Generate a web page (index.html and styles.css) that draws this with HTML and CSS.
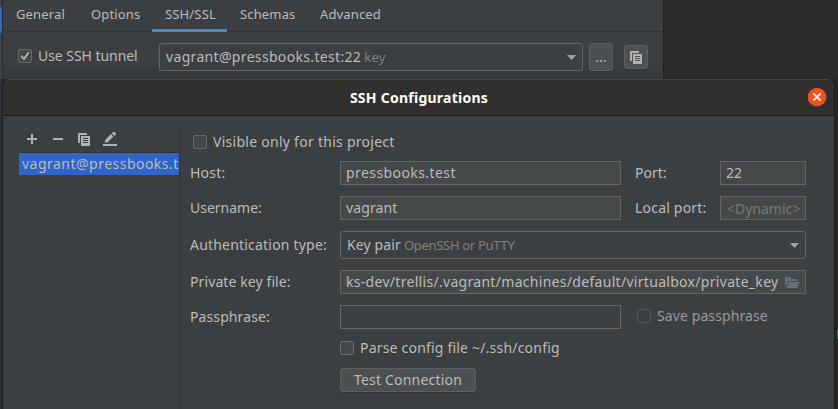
FILE: index.html
```
<!DOCTYPE html>
<html lang="en">
<head>
<meta charset="utf-8">
<title>SSH Configurations</title>
<link rel="stylesheet" href="styles.css">
</head>
<body>
<svg class="sprite" aria-hidden="true">
  <symbol id="copy" viewBox="0 0 12 13"><path fill="#afb1b3" d="M0 0h9v2H2v8H0z"/><path fill="#afb1b3" fill-rule="evenodd" d="M3 3h9v10H3zM5 5v1h5V5zM5 7v1h5V7zM5 9v1h5V9z"/></symbol>
  <symbol id="arrow" viewBox="0 0 9 5"><path fill="#a2a5a7" d="M0 0h9L4.5 5z"/></symbol>
</svg>
<div class="desktop">
  <div class="backdrop">
    <div class="edge"><i></i></div>
    <section class="settings">
      <nav class="tabs">
        <span class="tab t1">General</span><span class="tab t2">Options</span><span class="tab t3 active">SSH/SSL</span><span class="tab t4">Schemas</span><span class="tab t5">Advanced</span>
      </nav>
      <div class="tunnel">
        <span class="check"><svg width="14" height="14" viewBox="0 0 14 14"><path d="M3.3 6.8 6 10 10.8 3.3" fill="none" stroke="#b4b6b7" stroke-width="1.9"/></svg></span>
        <span class="tunnel-label">Use SSH tunnel</span>
        <div class="combo tunnel-combo"><span class="combo-text">vagrant@pressbooks.test:22</span><small class="key">key</small><svg class="arrow" width="9" height="5"><use href="#arrow"/></svg></div>
        <button class="btn more">...</button>
        <button class="btn copy-btn"><svg width="12" height="13"><use href="#copy"/></svg></button>
      </div>
    </section>
  </div>
  <section class="dialog">
    <header class="titlebar"><h1>SSH Configurations</h1>
      <svg class="close" width="20" height="20" viewBox="0 0 20 20"><circle cx="10" cy="10" r="9.3" fill="#e95420"/><path d="m6.5 6.5 7 7m0-7-7 7" stroke="#fff" stroke-width="1.7"/></svg>
    </header>
    <div class="content">
      <aside class="side">
        <div class="toolbar">
          <svg width="10" height="10" viewBox="0 0 10 10"><path fill="#afb1b3" d="M4 0h2v4h4v2H6v4H4V6H0V4h4z"/></svg>
          <svg width="10" height="10" viewBox="0 0 10 10"><path fill="#afb1b3" d="M0 4h10v2H0z"/></svg>
          <svg width="12" height="13"><use href="#copy"/></svg>
          <svg class="pencil" width="14" height="14" viewBox="0 0 14 14"><path fill="#afb1b3" d="M0 12h14v2H0zM2 10.5V8l6-6 2.5 2.5-6 6zM8.8 1.3 10 0h1.5L13 1.5V2.500L11.500 4z"/></svg>
        </div>
        <div class="item"><span>vagrant@pressbooks.t</span></div>
      </aside>
      <main class="form">
        <label class="check-row visible"><span class="check"></span><span class="w-visible">Visible only for this project</span></label>
        <div class="grid">
          <span class="label w-host">Host:</span><span class="field"><span class="w-pb">pressbooks.test</span></span><span class="label w-port">Port:</span><span class="field"><span class="w-22">22</span></span>
          <span class="label w-user">Username:</span><span class="field"><span class="w-vagrant">vagrant</span></span><span class="label w-local">Local port:</span><span class="field hint"><span class="w-dyn">&lt;Dynamic&gt;</span></span>
          <span class="label w-auth">Authentication type:</span><div class="combo wide"><span class="w-pair">Key pair</span><small class="w-open">OpenSSH or PuTTY</small><svg class="arrow" width="9" height="5"><use href="#arrow"/></svg></div>
          <span class="label w-file">Private key file:</span><div class="field wide path"><span class="w-path">ks-dev/trellis/.vagrant/machines/default/virtualbox/private_key</span><svg class="folder" width="15" height="11" viewBox="0 0 15 11"><path fill="#647077" d="M0 10V0h5l1.500 2H12v2H3.500zM4 5h11l-3 6H1z"/></svg></div>
          <span class="label w-pass">Passphrase:</span><span class="field dim"></span><label class="check-row save"><span class="check"></span><span class="w-save">Save passphrase</span></label>
          <label class="check-row parse"><span class="check"></span><span class="w-parse">Parse config file ~/.ssh/config</span></label>
          <button class="btn test"><span class="w-test">Test Connection</span></button>
        </div>
      </main>
    </div>
  </section>
</div>
</body>
</html>
```
FILE: styles.css
```
* { box-sizing: border-box; }
body { margin: 0; width: 838px; height: 409px; overflow: hidden; background: #242424; color: #bbbbbb; font: 14px/20px "Noto Sans", sans-serif; }
.sprite { position: absolute; width: 0; height: 0; }
svg { display: block; flex: none; }
span, small { white-space: nowrap; }
.desktop { height: 409px; background: linear-gradient(#3f6b4a, #3f6b4a) 837px 330px / 1px 9px no-repeat, linear-gradient(90deg, #2b3038 0 2px, #242424 2px); }
.backdrop { display: flex; height: 79px; background: #2b2b2b; }
.edge { width: 3px; padding-top: 7px; background: linear-gradient(90deg, #3c414a 0 2px, #292b2c 2px); }
.edge i { display: block; width: 2px; height: 26px; background: #2f65ca; }
.settings { width: 661px; background: linear-gradient(#3c3f41 64px, #343739); border-right: 1px solid #222; }
.tabs { display: flex; height: 32px; border-bottom: 1px solid #323232; padding-left: 13px; gap: 26px; font-size: 13px; line-height: 29px; letter-spacing: 0.15px; }
.tab { height: 32px; width: 49px; }
.t2 { width: 48px; } .t4 { width: 54px; } .t5 { width: 62px; }
.active { width: 75px; margin: 0 -13px; padding-left: 13px; border-bottom: 3px solid #4a88c7; }
.tunnel { display: flex; height: 47px; padding: 11px 0 0 15px; }
.check { flex: none; width: 14px; height: 14px; border: 1px solid #6b6b6b; border-radius: 2px; background: #43494a; }
.check svg { margin: -1px; }
.tunnel .check { margin-top: 6px; }
.tunnel-label { width: 121px; margin: 3px 0 0 6px; letter-spacing: -0.05px; }
.combo { display: flex; align-items: center; height: 28px; border: 1px solid #646464; border-radius: 3px; padding: 0 6px; background: #3c3f41; }
.combo small { margin-left: 3px; color: #808080; font-size: 13px; }
.arrow { margin-left: auto; }
.tunnel-combo { width: 424px; }
.combo-text { letter-spacing: 0.33px; }
.key { letter-spacing: 0.3px; }
.btn { display: flex; align-items: center; justify-content: center; padding: 0; border: 1px solid #5e6060; border-radius: 3px; background: #4c5052; color: #bbb; font: inherit; box-shadow: 0 1px 1px #0003; }
.more { width: 24px; height: 28px; margin-left: 6px; }
.copy-btn { width: 24px; height: 24px; margin: 2px 0 0 11px; }
.dialog { width: 833px; height: 330px; margin-left: 2px; border: 1px solid #1e1e1e; border-width: 0 1px; border-radius: 8px 8px 0 0; background: #3c3f41; overflow: hidden; }
.titlebar { display: flex; align-items: center; justify-content: center; height: 37px; padding-bottom: 1px; border-top: 1px solid #484545; border-bottom: 1px solid #1c1c1c; background: #322f2f; position: relative; }
h1 { margin: 2px 0 0 1px; font-size: 14px; font-weight: bold; color: #fff; white-space: nowrap; letter-spacing: 0.25px; }
.close { position: absolute; right: 7px; top: 7px; }
.content { display: flex; height: 293px; }
.side { width: 177px; height: 293px; margin-top: 11px; padding-left: 16px; border-right: 1px solid #323232; }
.toolbar { display: flex; align-items: center; height: 25px; gap: 16px; padding: 0 0 1px 8px; }
.toolbar svg:nth-child(3) { margin-left: -1px; }
.pencil { margin-left: -3px; }
.item { height: 23px; border-top: 1px solid #323232; background: #2f65ca; overflow: hidden; padding-left: 3px; line-height: 22px; letter-spacing: 0.48px; }
.form { padding: 19px 0 0 10px; }
.check-row { display: flex; align-items: center; height: 14px; gap: 6px; }
.visible { margin: 0 0 12px 3px; }
.grid { display: grid; grid-template-columns: 150px 281px 99px 86px; row-gap: 11px; align-items: center; }
.field { display: flex; align-items: center; height: 24px; padding: 0 5px; border: 1px solid #646464; background: #45494a; }
.field.dim { background: #3c3f41; }
.hint { color: #777; padding-left: 6px; }
.hint span { margin-top: 2px; }
.wide { grid-column: 2 / 5; }
.folder { margin-left: auto; }
.w-port, .w-local { padding-left: 14px; }
.save { grid-column: 3 / 5; margin-top: -2px; padding-left: 16px; color: #999; }
.save .check { border-color: #545657; background: #3c3f41; }
.parse { grid-column: 2 / 5; height: 17px; padding-bottom: 2px; }
.test { grid-column: 2; width: 136px; height: 24px; }
.w-visible { letter-spacing: 0.27px; }
.w-host, .w-auth { letter-spacing: 0.2px; }
.w-pb { letter-spacing: 0.42px; }
.w-vagrant, .w-file, .w-pass, .w-save { letter-spacing: 0.1px; }
.w-local { letter-spacing: 0.2px; }
.w-pair { letter-spacing: 0.12px; }
.w-open { letter-spacing: -0.3px; }
.w-path { letter-spacing: 0.3px; }
.w-parse { letter-spacing: 0.2px; }
.w-test { letter-spacing: 0.2px; }
```
